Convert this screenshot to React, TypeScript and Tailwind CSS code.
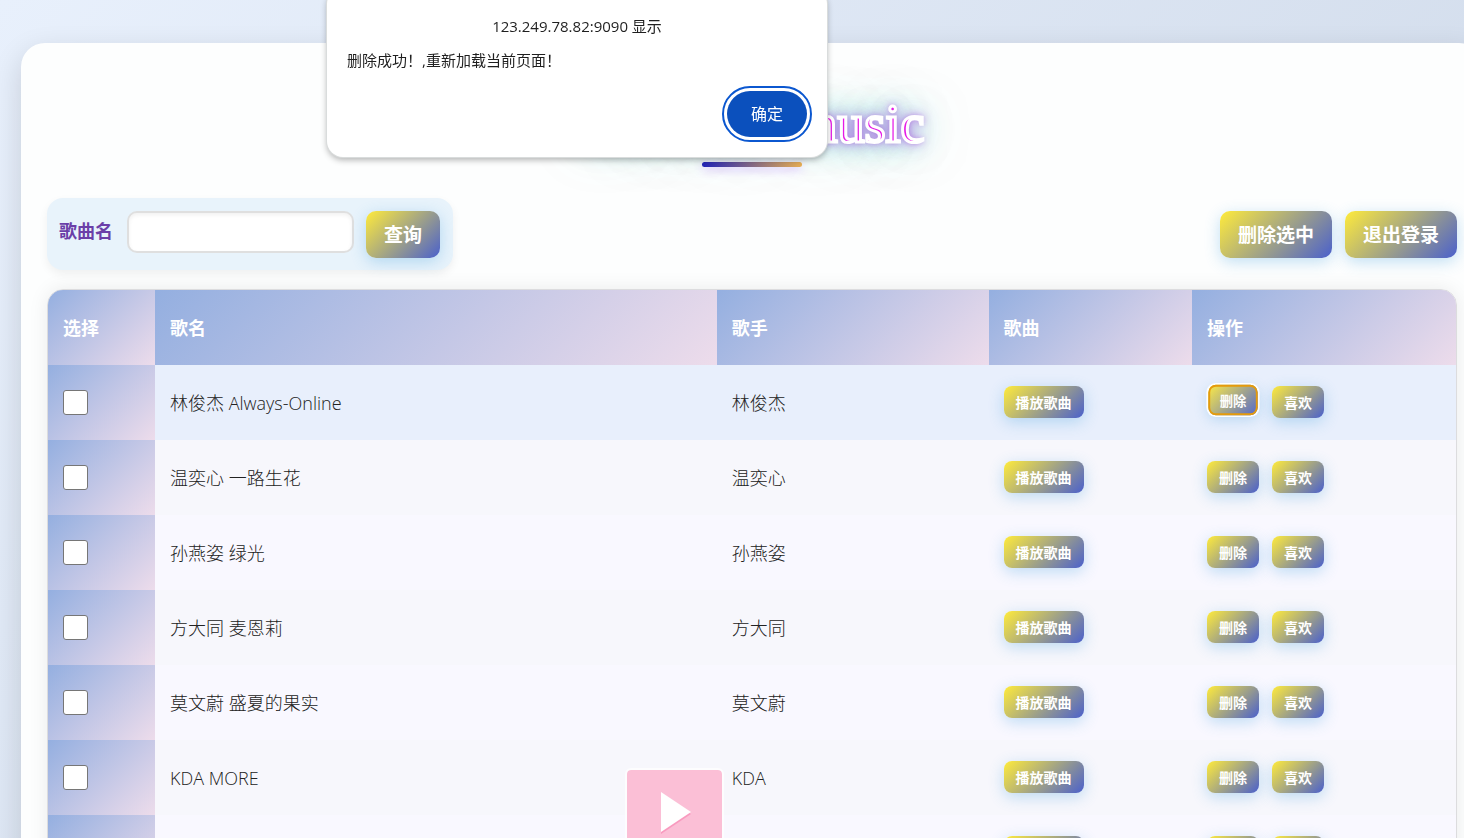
import React, { useState } from "react";
import clsx from "clsx";

const songs = [
  { id: 1, name: "林俊杰 Always-Online", singer: "林俊杰" },
  { id: 2, name: "温奕心 一路生花", singer: "温奕心" },
  { id: 3, name: "孙燕姿 绿光", singer: "孙燕姿" },
  { id: 4, name: "方大同 麦恩莉", singer: "方大同" },
  { id: 5, name: "莫文蔚 盛夏的果实", singer: "莫文蔚" },
  { id: 6, name: "KDA MORE", singer: "KDA" },
  { id: 7, name: "KDA POP/STARS", singer: "KDA" },
];

const columns = [
  { label: "选择", width: "w-[7.6%]" },
  { label: "歌名", width: "w-[39.9%]" },
  { label: "歌手", width: "w-[19.3%]" },
  { label: "歌曲", width: "w-[14.45%]" },
  { label: "操作", width: "w-[18.75%]" },
];

const buttonBase =
  "bg-linear-135/srgb from-[#ffeb3b] to-[#4a60cc] font-bold text-white whitespace-nowrap shadow-[0_4px_15px_rgba(52,152,219,0.3)]";

function ActionButton({ children }: { children: React.ReactNode }) {
  return (
    <button className={clsx(buttonBase, "h-[47px] rounded-[10px] px-[18px] pt-0.5 text-[19px]")}>
      {children}
    </button>
  );
}

function RowButton({
  children,
  focused = false,
}: {
  children: React.ReactNode;
  focused?: boolean;
}) {
  return (
    <button
      className={clsx(
        buttonBase,
        "h-8 rounded-lg px-3 pt-0.5 text-sm",
        focused &&
          "-translate-y-0.5 scale-95 opacity-95 outline-2 -outline-offset-2 outline-[#e59700] ring-2 ring-white",
      )}
    >
      {children}
    </button>
  );
}

function AlertDialog({ onClose }: { onClose: () => void }) {
  return (
    <div
      role="alertdialog"
      aria-labelledby="alert-title"
      aria-describedby="alert-text"
      className="fixed -top-3 left-[327px] z-20 w-[500px] rounded-2xl bg-white px-5 pt-7 pb-5 text-[15px] leading-5 text-[#1f1f1f] shadow-[0_0_0_1px_#d9dcdc,0_3px_6px_rgba(0,0,0,0.3)]"
    >
      <h2 id="alert-title" className="text-center">
        123.249.78.82:9090 显示
      </h2>
      <p id="alert-text" className="mt-3.5">
        删除成功！,重新加载当前页面！
      </p>
      <div className="mt-[21px] flex justify-end">
        <button
          onClick={onClose}
          className="h-[46px] w-20 rounded-full bg-[#0b50bd] text-base text-white outline-2 outline-offset-3 outline-[#0b57d0]"
        >
          确定
        </button>
      </div>
    </div>
  );
}

export default function App() {
  const [alertOpen, setAlertOpen] = useState(true);
  const [keyword, setKeyword] = useState("");

  return (
    <div className="h-screen overflow-hidden bg-linear-135/srgb from-[#e8f0fc] to-[#cbd6e6] pt-[43px] font-['Open_Sans','Noto_Sans_CJK_SC',sans-serif]">
      <main className="-mr-[19px] ml-[21px] rounded-t-3xl bg-[#fdfefe] px-[26px] pt-[49px] shadow-[0_10px_30px_rgba(0,0,0,0.14)]">
        <header className="flex flex-col items-center">
          <h1 className="font-['Liberation_Serif',serif] text-[54px] leading-[64px] whitespace-nowrap text-[#e619e6] [-webkit-text-stroke:3px_white] [text-shadow:0_0_5px_#b070e0,0_0_10px_#b070e0,0_0_16px_rgba(160,80,230,0.8),0_0_30px_rgba(0,180,160,0.7),0_0_50px_rgba(0,190,170,0.6)]">
            Welcome music
          </h1>
          <div className="mt-1.5 h-[5px] w-[100px] rounded-full bg-linear-90/srgb from-[#2124b8] to-[#e8ae54] shadow-[0_3px_10px_rgba(150,60,255,0.3)]" />
        </header>

        <div className="mt-[31px] flex items-start justify-between">
          <form
            onSubmit={(e) => e.preventDefault()}
            className="flex h-[72px] items-start gap-3 rounded-2xl bg-[#e8f3fb] pt-[13px] pr-[13px] pl-3 shadow-[0_4px_10px_rgba(0,0,0,0.06)]"
          >
            <label
              htmlFor="song-name"
              className="mr-0.5 text-lg leading-10 font-bold text-[#6b3fa8]"
            >
              歌曲名
            </label>
            <input
              id="song-name"
              type="text"
              value={keyword}
              onChange={(e) => setKeyword(e.target.value)}
              className="h-[42px] w-[227px] rounded-[10px] border-2 border-[#dfdfdf] bg-white px-3 shadow-[inset_0_2px_4px_rgba(0,0,0,0.06)]"
            />
            <ActionButton>查询</ActionButton>
          </form>
          <div className="flex gap-[13px] pt-[13px]">
            <ActionButton>删除选中</ActionButton>
            <ActionButton>退出登录</ActionButton>
          </div>
        </div>

        {/* Song list */}
        <div className="mt-[19px] overflow-hidden rounded-2xl border border-[#dcdcde] shadow-[0_0_20px_rgba(0,0,0,0.08)]">
          <table className="w-full table-fixed border-collapse text-left text-lg">
            <thead>
              <tr className="h-[75px]">
                {columns.map((col) => (
                  <th
                    key={col.label}
                    className={clsx(
                      col.width,
                      "bg-linear-135/srgb from-[#94afe0] to-[#eddceb] px-[15px] font-bold text-white",
                    )}
                  >
                    {col.label}
                  </th>
                ))}
              </tr>
            </thead>
            <tbody>
              {songs.map((song, i) => (
                <tr
                  key={song.id}
                  className={clsx(
                    "h-[75px]",
                    i === 0 ? "bg-[#e8effc]" : i % 2 ? "bg-[#f7f7fc]" : "bg-[#f9f8ff]",
                  )}
                >
                  <td className="bg-linear-135/srgb from-[#94afe0] to-[#eddceb] px-[15px]">
                    <input
                      type="checkbox"
                      aria-label={song.name}
                      className="block size-[25px] appearance-none rounded-[3px] border border-[#767676] bg-white checked:bg-[#3f51b5]"
                    />
                  </td>
                  <td className="px-[15px] font-light text-[#222]">{song.name}</td>
                  <td className="px-[15px] font-light text-[#222]">{song.singer}</td>
                  <td className="px-[15px]">
                    <div className="flex pb-0.5">
                      <RowButton>播放歌曲</RowButton>
                    </div>
                  </td>
                  <td className="px-[15px]">
                    <div className="flex gap-[13px] pb-0.5">
                      <RowButton focused={i === 0}>删除</RowButton>
                      <RowButton>喜欢</RowButton>
                    </div>
                  </td>
                </tr>
              ))}
            </tbody>
          </table>
        </div>
      </main>

      {/* Floating player */}
      <button
        aria-label="播放"
        className="fixed -bottom-7 left-[625px] z-10 flex h-[98px] w-[99px] items-start justify-center rounded-md border-2 border-white/70 bg-[#fbbfd6] bg-clip-padding pt-5"
      >
        <svg width="34" height="44" viewBox="0 0 34 44" aria-hidden="true">
          <path d="M3 4v40l30-20z" fill="#f99abf" />
          <path d="M3 2v40l30-20z" fill="#fff" />
        </svg>
      </button>

      {alertOpen && <AlertDialog onClose={() => setAlertOpen(false)} />}
    </div>
  );
}
